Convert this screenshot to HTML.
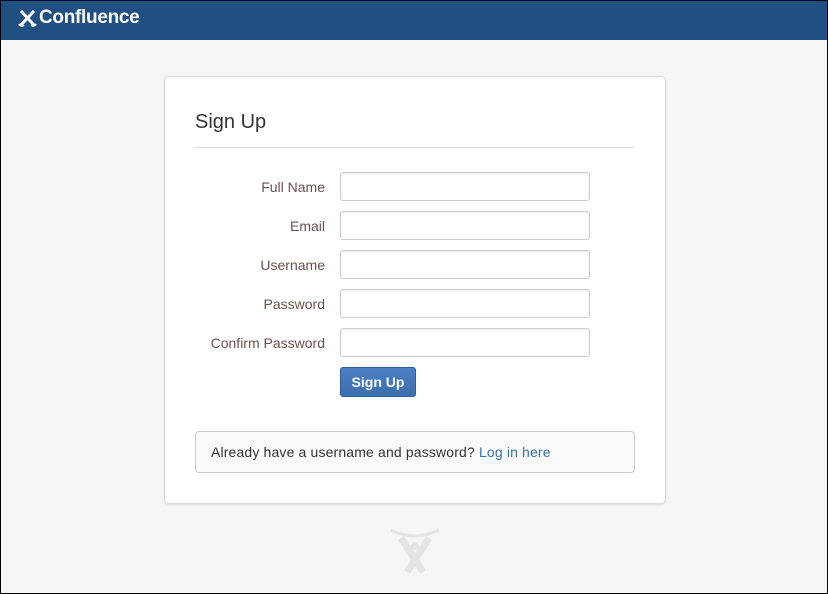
<!DOCTYPE html>
<html><head><style>
*{box-sizing:border-box;margin:0;padding:0}
body{width:828px;height:594px;background:#f5f5f5;font-family:"Liberation Sans",Arial,sans-serif;position:relative;overflow:hidden}
.frame{position:absolute;left:0;top:0;width:828px;height:594px;border:1px solid #000;z-index:5}
.hdr{position:absolute;left:0;top:0;width:828px;height:40px;background:#205081}
.logo{position:absolute;left:39px;top:7px;color:#fff;font-weight:bold;font-size:19px;letter-spacing:-0.3px}
.card{position:absolute;left:164px;top:76px;width:502px;height:428px;background:#fff;border:1px solid #dcdcdc;border-radius:5px;box-shadow:0 1px 2px rgba(0,0,0,.1)}
h1{position:absolute;left:195px;top:111px;font-size:20px;font-weight:normal;color:#333}
.hr{position:absolute;left:195px;top:147px;width:440px;border-top:1px solid #ddd}
.lbl{position:absolute;right:503px;font-size:14px;color:#6e4f4f;text-align:right}
.inp{position:absolute;left:340px;width:250px;height:29px;border:1px solid #ccc;border-radius:3px;background:#fff;box-shadow:inset 0 1px 2px rgba(0,0,0,.08)}
.btn{position:absolute;left:340px;top:367px;width:76px;height:30px;background:linear-gradient(#4a7fc1,#3b6fb0);border:1px solid #2f5e9b;border-radius:3px;color:#fff;font-weight:bold;font-size:14px;text-align:center;line-height:28px}
.info{position:absolute;left:195px;top:431px;width:440px;height:42px;border:1px solid #ccc;border-radius:4px;background:#fafafa;font-size:14px;color:#333;padding:12px 0 0 15px;letter-spacing:0.15px}
.info a{color:#3572b0;text-decoration:none}
</style></head><body>
<div class="hdr">
<svg style="position:absolute;left:18px;top:10px" width="20" height="18" viewBox="0 0 20 18"><path d="M3 1 L16 15 M16 1 L3 15" stroke="#fff" stroke-width="3" fill="none"/><path d="M1 14 Q3 17 6 15 M13 15 Q16 17 18 14" stroke="#fff" stroke-width="2" fill="none"/></svg>
<div class="logo">Confluence</div></div>
<div class="card"></div>
<h1>Sign Up</h1>
<div class="hr"></div>
<div class="lbl" style="top:179px">Full Name</div><div class="inp" style="top:172px"></div>
<div class="lbl" style="top:218px">Email</div><div class="inp" style="top:211px"></div>
<div class="lbl" style="top:257px">Username</div><div class="inp" style="top:250px"></div>
<div class="lbl" style="top:296px">Password</div><div class="inp" style="top:289px"></div>
<div class="lbl" style="top:335px">Confirm Password</div><div class="inp" style="top:328px"></div>
<div class="btn">Sign Up</div>
<div class="info">Already have a username and password? <a>Log in here</a></div>
<svg style="position:absolute;left:389px;top:526px" width="52" height="48" viewBox="0 0 52 48"><path d="M2 4 Q26 16 50 4" stroke="#e4e4e4" stroke-width="3" fill="none"/><path d="M12 12 L34 46 M40 12 L18 46" stroke="#e4e4e4" stroke-width="7" fill="none"/><circle cx="26" cy="20" r="4" fill="#e4e4e4"/></svg>
<div class="frame"></div>
</body></html>
